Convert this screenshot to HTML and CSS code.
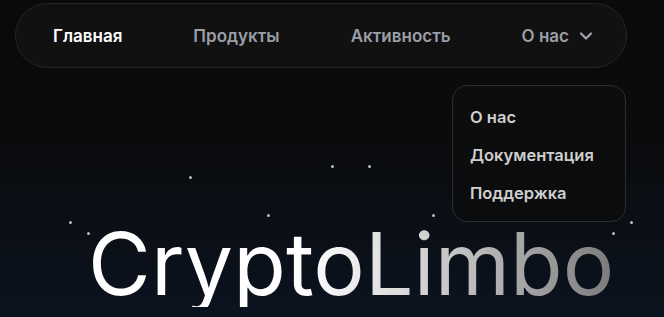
FILE: index.html
```html
<!DOCTYPE html>
<html lang="ru">
<head>
    <meta charset="UTF-8">
    <meta name="viewport" content="width=device-width, initial-scale=1.0">
    <title>CryptoLimbo</title>
    <link rel="stylesheet" href="styles.css">
</head>
<body>
    <div class="sky">
        <span class="star" style="left:189px;top:176px"></span>
        <span class="star" style="left:331px;top:165px"></span>
        <span class="star" style="left:368px;top:165px"></span>
        <span class="star" style="left:267px;top:214px"></span>
        <span class="star" style="left:432px;top:214px"></span>
        <span class="star" style="left:69px;top:221px"></span>
        <span class="star" style="left:87px;top:232px"></span>
        <span class="star" style="left:630px;top:221px"></span>
        <span class="star" style="left:612px;top:232px"></span>
    </div>

    <header class="topbar">
        <nav class="nav">
            <a href="#" class="nav-link active">Главная</a>
            <a href="#" class="nav-link">Продукты</a>
            <a href="#" class="nav-link">Активность</a>
            <a href="#" class="nav-link nav-more">О нас
                <svg class="chevron" width="14" height="14" viewBox="0 0 14 14">
                    <path d="M2 4.5 L7 9.5 L12 4.5" fill="none" stroke="currentColor" stroke-width="2.2" stroke-linecap="round" stroke-linejoin="round"/>
                </svg>
            </a>
        </nav>
        <div class="dropdown">
            <a href="#">О нас</a>
            <a href="#">Документация</a>
            <a href="#">Поддержка</a>
        </div>
    </header>

    <main class="hero">
        <h1 class="brand">CryptoLimbo</h1>
    </main>
</body>
</html>
```

FILE: styles.css
```css
* {
    box-sizing: border-box;
}
html, body {
    height: 100%;
}
body {
    margin: 0;
    font-family: Inter, "Noto Sans", sans-serif;
    color: #fff;
    background: linear-gradient(180deg, #0a0a0a 0%, #0a0b0d 45%, #0b1320 100%);
    overflow: hidden;
    position: relative;
}
a {
    text-decoration: none;
    color: inherit;
}
.sky {
    position: absolute;
    inset: 0;
    pointer-events: none;
}
.star {
    position: absolute;
    width: 3px;
    height: 3px;
    border-radius: 50%;
    background: #b4bcc6;
}
.topbar {
    position: relative;
    padding: 3px 0 0 15px;
}
.nav {
    width: 612px;
    height: 65px;
    display: flex;
    align-items: center;
    gap: 71px;
    padding: 0 30px 0 37px;
    background: #111111;
    border: 1px solid #262626;
    border-radius: 33px;
}
.nav-link {
    font-size: 17px;
    font-weight: 600;
    color: #9a9ea6;
    white-space: nowrap;
    flex-shrink: 0;
}
.nav-link.active {
    color: #ffffff;
}
.nav-more {
    display: flex;
    align-items: center;
    gap: 10px;
}
.chevron {
    color: #a0a4ab;
}
.dropdown {
    position: absolute;
    left: 452px;
    top: 85px;
    width: 174px;
    height: 137px;
    display: flex;
    flex-direction: column;
    gap: 18px;
    padding: 21px 17px;
    background: linear-gradient(180deg, #0d0d0d, #0b0c0e);
    border: 1px solid #2e2e2e;
    border-radius: 15px;
}
.dropdown a {
    font-size: 16.5px;
    font-weight: 600;
    line-height: 20px;
    color: #cfcfcf;
}
.hero {
    padding: 153px 0 0 88px;
}
.brand {
    margin: 0;
    font-size: 86px;
    font-weight: 400;
    line-height: 1;
    letter-spacing: 0.1px;
    background: linear-gradient(90deg, #ffffff 0%, #ffffff 40%, #d6d6d6 62%, #7a7a7a 100%);
    -webkit-background-clip: text;
    background-clip: text;
    color: transparent;
    display: inline-block;
}
```
